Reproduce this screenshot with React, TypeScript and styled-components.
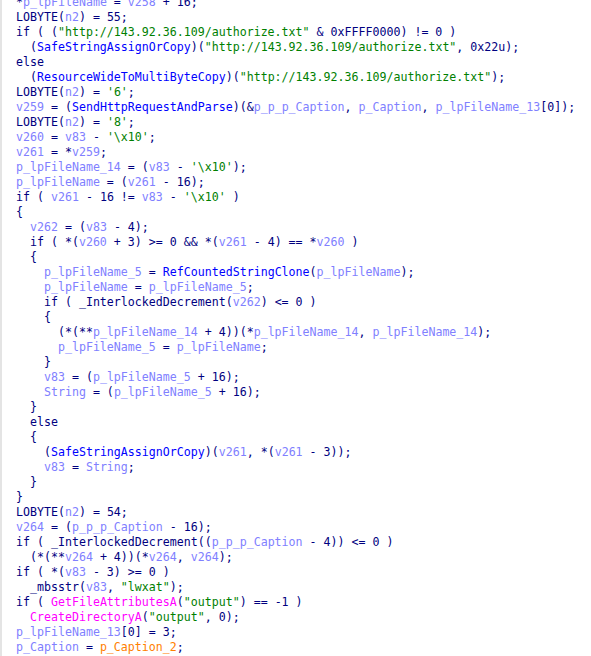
import React from "react";
import styled, { createGlobalStyle } from "styled-components";

const Global = createGlobalStyle`
  html, body { margin: 0; padding: 0; background: #ffffff; }
  body { overflow: hidden; }
`;

const Frame = styled.div`
  display: flex;
  width: 591px;
  height: 656px;
  overflow: hidden;
  background: #ffffff;
`;

const Gutter = styled.div`
  width: 2px;
  flex: none;
  background: #e4e4e4;
`;

const Code = styled.pre`
  margin: -5px 0 0 0;
  padding: 0 0 0 14px;
  font-family: "DejaVu Sans Mono", "Liberation Mono", monospace;
  font-size: 11.62px;
  line-height: 15px;
  color: #000080;
  white-space: pre;
`;

const Line = styled.div`
  height: 15px;
`;

type Kind = "v" | "f" | "s" | "i" | "g";

const palette: Record<Kind, string> = {
  v: "#8080ff",
  f: "#0000ff",
  s: "#008000",
  i: "#ff00ff",
  g: "#ff8000",
};

const Tok = styled.span<{ $k: Kind }>`
  color: ${(p) => palette[p.$k]};
`;

// markup: [v:text] etc.
const src: string[] = [
  "*[v:p_lpFileName] = [v:v258] + 16;",
  "LOBYTE([v:n2]) = 55;",
  'if ( ([s:"http://143.92.36.109/authorize.txt"] & 0xFFFF0000) != 0 )',
  '  ([f:SafeStringAssignOrCopy])([s:"http://143.92.36.109/authorize.txt"], 0x22u);',
  "else",
  '  ([f:ResourceWideToMultiByteCopy])([s:"http://143.92.36.109/authorize.txt"]);',
  "LOBYTE([v:n2]) = [s:'6'];",
  "[v:v259] = ([f:SendHttpRequestAndParse])(&[v:p_p_p_Caption], [v:p_Caption], [v:p_lpFileName_13][0]);",
  "LOBYTE([v:n2]) = [s:'8'];",
  "[v:v260] = [v:v83] - [s:'\\x10'];",
  "[v:v261] = *[v:v259];",
  "[v:p_lpFileName_14] = ([v:v83] - [s:'\\x10']);",
  "[v:p_lpFileName] = ([v:v261] - 16);",
  "if ( [v:v261] - 16 != [v:v83] - [s:'\\x10'] )",
  "{",
  "  [v:v262] = ([v:v83] - 4);",
  "  if ( *([v:v260] + 3) >= 0 && *([v:v261] - 4) == *[v:v260] )",
  "  {",
  "    [v:p_lpFileName_5] = [f:RefCountedStringClone]([v:p_lpFileName]);",
  "    [v:p_lpFileName] = [v:p_lpFileName_5];",
  "    if ( _InterlockedDecrement([v:v262]) <= 0 )",
  "    {",
  "      (*(**[v:p_lpFileName_14] + 4))(*[v:p_lpFileName_14], [v:p_lpFileName_14]);",
  "      [v:p_lpFileName_5] = [v:p_lpFileName];",
  "    }",
  "    [v:v83] = ([v:p_lpFileName_5] + 16);",
  "    [v:String] = ([v:p_lpFileName_5] + 16);",
  "  }",
  "  else",
  "  {",
  "    ([f:SafeStringAssignOrCopy])([v:v261], *([v:v261] - 3));",
  "    [v:v83] = [v:String];",
  "  }",
  "}",
  "LOBYTE([v:n2]) = 54;",
  "[v:v264] = ([v:p_p_p_Caption] - 16);",
  "if ( _InterlockedDecrement(([v:p_p_p_Caption] - 4)) <= 0 )",
  "  (*(**[v:v264] + 4))(*[v:v264], [v:v264]);",
  "if ( *([v:v83] - 3) >= 0 )",
  '  _mbsstr([v:v83], [s:"lwxat"]);',
  'if ( [i:GetFileAttributesA]([s:"output"]) == -1 )',
  '  [i:CreateDirectoryA]([s:"output"], 0);',
  "[v:p_lpFileName_13][0] = 3;",
  "[v:p_Caption] = [g:p_Caption_2];",
];

function parse(line: string): React.ReactNode[] {
  const out: React.ReactNode[] = [];
  const re = /\[([vfsig]):([^\]]*)\]/g;
  let last = 0;
  let m: RegExpExecArray | null;
  let i = 0;
  while ((m = re.exec(line))) {
    if (m.index > last) out.push(line.slice(last, m.index));
    out.push(
      <Tok key={i++} $k={m[1] as Kind}>
        {m[2]}
      </Tok>
    );
    last = m.index + m[0].length;
  }
  if (last < line.length) out.push(line.slice(last));
  return out;
}

export default function App() {
  return (
    <>
      <Global />
      <Frame>
        <Gutter />
        <Code>
          {src.map((l, idx) => (
            <Line key={idx}>{parse(l)}</Line>
          ))}
        </Code>
      </Frame>
    </>
  );
}
